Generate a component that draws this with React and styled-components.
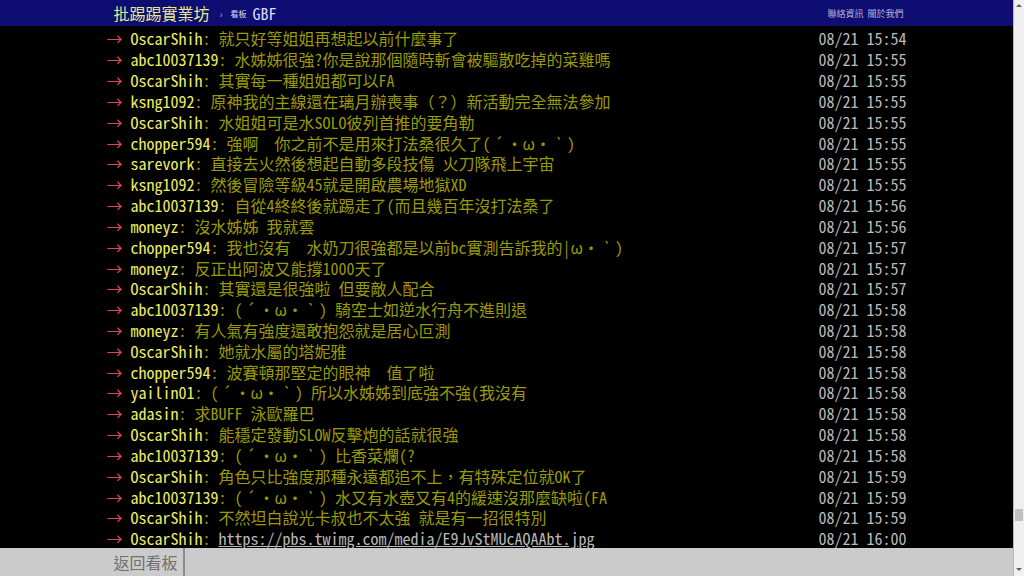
import React from 'react';
import styled, { createGlobalStyle } from 'styled-components';

const mono = `"Noto Sans Mono CJK TC", "Noto Sans CJK TC", "Liberation Mono", monospace`;

const GlobalStyle = createGlobalStyle`
  html, body {
    margin: 0;
    padding: 0;
    height: 100%;
    overflow: hidden;
    background: #000;
  }
  #root {
    height: 100%;
  }
`;

const Shell = styled.div`
  display: flex;
  height: 100%;
  width: 100%;
`;

const Page = styled.div`
  flex: 1;
  display: flex;
  flex-direction: column;
  min-width: 0;
  font-family: ${mono};
`;

const Wrap = styled.div`
  width: 800px;
  margin: 0 auto;
  display: flex;
  align-items: center;
  height: 100%;
`;

const Topbar = styled.header`
  height: 26px;
  flex: none;
  background: #0d0d72;
`;

const Logo = styled.a`
  margin-left: 7px;
  font-size: 16px;
  color: #e8e88a;
  text-decoration: none;
`;

const Caret = styled.span`
  margin: 0 8px 0 10px;
  font-size: 10px;
  color: #a8a8c8;
`;

const BoardTag = styled.span`
  font-size: 8px;
  color: #d8d8f0;
  margin-right: 6px;
`;

const BoardName = styled.a`
  font-size: 16px;
  color: #dcdcf8;
  text-decoration: none;
`;

const Links = styled.nav`
  margin-left: auto;
  margin-right: 3px;
  display: flex;
  gap: 4px;
`;

const TopLink = styled.a`
  font-size: 9px;
  color: #b4b4dc;
  text-decoration: none;
`;

const Main = styled.main`
  flex: 1;
  overflow: hidden;
  background: #000;
`;

const List = styled.div`
  width: 800px;
  margin: 0 auto;
  padding-top: 2.4px;
  font-size: 16px;
`;

const Row = styled.div`
  display: flex;
  height: 20.83px;
  line-height: 20.83px;
  white-space: pre;
`;

const Tag = styled.span`
  color: #d84a5c;
`;

const User = styled.span`
  color: #eeee62;
`;

const Content = styled.span`
  color: #9a9a08;
`;

/* the old board font draws these accent marks a full cell wide */
const Wide = styled.span`
  display: inline-block;
  width: 1em;
  text-align: center;
`;

const Url = styled.a`
  color: #b8b8b8;
  text-decoration: underline;
`;

const Time = styled.span`
  margin-left: auto;
  color: #bbb;
`;

const Footer = styled.footer`
  height: 28px;
  flex: none;
  background: #cbcbcb;
`;

const FootWrap = styled(Wrap)`
  align-items: stretch;
`;

const BackLink = styled.a`
  display: flex;
  align-items: center;
  padding: 0 5px 0 7px;
  border-right: 2px solid #8c8c8c;
  font-size: 16px;
  color: #707070;
  text-decoration: none;
`;

const Scrollbar = styled.div`
  width: 10px;
  flex: none;
  display: flex;
  flex-direction: column;
  align-items: center;
  background: #f0f0f0;
  border-left: 1px solid #b8b8b8;
`;

const Arrow = styled.span`
  width: 0;
  height: 0;
  margin: ${p => (p.down ? '3px 0 5px' : '4px 0 3px')};
  border-left: 3px solid transparent;
  border-right: 3px solid transparent;
  ${p => (p.down ? 'border-top: 3px solid #606060;' : 'border-bottom: 3px solid #606060;')}
`;

const Track = styled.div`
  flex: 1;
  width: 100%;
  display: flex;
  flex-direction: column;
  align-items: center;
`;

const Thumb = styled.div`
  margin-top: auto;
  margin-bottom: 44px;
  width: 8px;
  height: 12px;
  background: #c1c1c1;
`;

const pushes = [
  ['OscarShih', '就只好等姐姐再想起以前什麼事了', '15:54'],
  ['abc10037139', '水姊姊很強?你是說那個隨時斬會被驅散吃掉的菜雞嗎', '15:55'],
  ['OscarShih', '其實每一種姐姐都可以FA', '15:55'],
  ['ksng1092', '原神我的主線還在璃月辦喪事（？）新活動完全無法參加', '15:55'],
  ['OscarShih', '水姐姐可是水SOLO彼列首推的要角勒', '15:55'],
  ['chopper594', '強啊　你之前不是用來打法桑很久了(´・ω・`)', '15:55'],
  ['sarevork', '直接去火然後想起自動多段技傷 火刀隊飛上宇宙', '15:55'],
  ['ksng1092', '然後冒險等級45就是開啟農場地獄XD', '15:55'],
  ['abc10037139', '自從4終終後就踢走了(而且幾百年沒打法桑了', '15:56'],
  ['moneyz', '沒水姊姊 我就雲', '15:56'],
  ['chopper594', '我也沒有　水奶刀很強都是以前bc實測告訴我的|ω・`)', '15:57'],
  ['moneyz', '反正出阿波又能撐1000天了', '15:57'],
  ['OscarShih', '其實還是很強啦 但要敵人配合', '15:57'],
  ['abc10037139', '(´・ω・`) 騎空士如逆水行舟不進則退', '15:58'],
  ['moneyz', '有人氣有強度還敢抱怨就是居心叵測', '15:58'],
  ['OscarShih', '她就水屬的塔妮雅', '15:58'],
  ['chopper594', '波賽頓那堅定的眼神　值了啦', '15:58'],
  ['yailin01', '(´・ω・`) 所以水姊姊到底強不強(我沒有', '15:58'],
  ['adasin', '求BUFF 泳歐羅巴', '15:58'],
  ['OscarShih', '能穩定發動SLOW反擊炮的話就很強', '15:58'],
  ['abc10037139', '(´・ω・`) 比香菜爛(?', '15:58'],
  ['OscarShih', '角色只比強度那種永遠都追不上，有特殊定位就OK了', '15:59'],
  ['abc10037139', '(´・ω・`) 水又有水壺又有4的緩速沒那麼缺啦(FA', '15:59'],
  ['OscarShih', '不然坦白說光卡叔也不太強 就是有一招很特別', '15:59'],
  ['OscarShih', 'https://pbs.twimg.com/media/E9JvStMUcAQAAbt.jpg', '16:00'],
];

const widen = text =>
  text.split(/([´`])/).map((part, i) =>
    part === '´' || part === '`' ? <Wide key={i}>{part}</Wide> : part
  );

const Push = ({ user, text, time }) => (
  <Row>
    <Tag>→ </Tag>
    <User>{user}</User>
    <Content>
      {': '}
      {text.startsWith('http') ? <Url href={text}>{text}</Url> : widen(text)}
    </Content>
    <Time>08/21 {time}</Time>
  </Row>
);

export default function App() {
  return (
    <Shell>
      <GlobalStyle />
      <Page>
        <Topbar>
          <Wrap>
            <Logo href="#">批踢踢實業坊</Logo>
            <Caret>›</Caret>
            <BoardTag>看板</BoardTag>
            <BoardName href="#">GBF</BoardName>
            <Links>
              <TopLink href="#">聯絡資訊</TopLink>
              <TopLink href="#">關於我們</TopLink>
            </Links>
          </Wrap>
        </Topbar>
        <Main>
          <List>
            {pushes.map(([user, text, time], i) => (
              <Push key={i} user={user} text={text} time={time} />
            ))}
          </List>
        </Main>
        <Footer>
          <FootWrap>
            <BackLink href="#">返回看板</BackLink>
          </FootWrap>
        </Footer>
      </Page>
      <Scrollbar>
        <Arrow />
        <Track>
          <Thumb />
        </Track>
        <Arrow down />
      </Scrollbar>
    </Shell>
  );
}
